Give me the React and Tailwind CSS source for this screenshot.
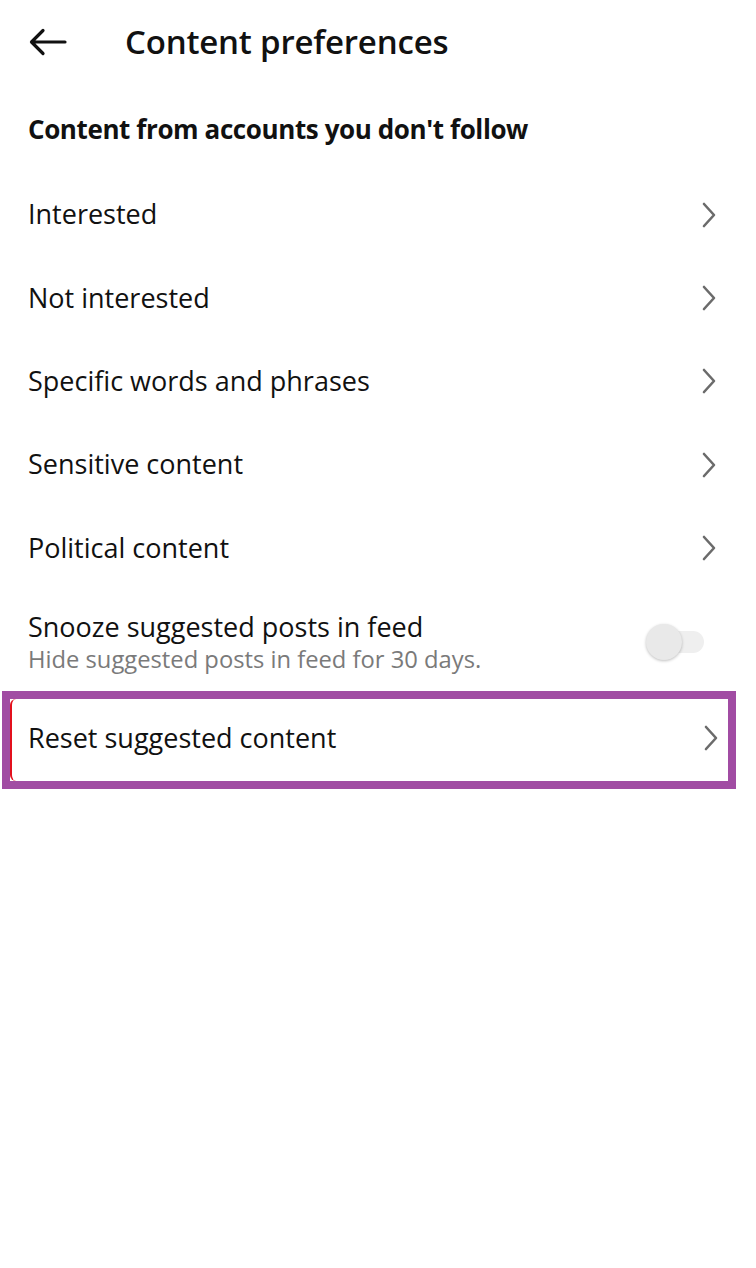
import { useState } from "react";

const rows = [
  "Interested",
  "Not interested",
  "Specific words and phrases",
  "Sensitive content",
  "Political content",
];

function Chevron() {
  return (
    <svg width="18" height="28" viewBox="0 0 18 28" className="shrink-0">
      <path d="M4 3 L14 14 L4 25" fill="none" stroke="#6b6b6b" strokeWidth="2.6" strokeLinecap="round" strokeLinejoin="round" />
    </svg>
  );
}

function BackArrow() {
  return (
    <svg width="40" height="30" viewBox="0 0 40 30">
      <path d="M37 15 H4 M15 3.5 L3.5 15 L15 26.5" fill="none" stroke="#111" strokeWidth="3.2" strokeLinecap="round" strokeLinejoin="round" />
    </svg>
  );
}

export default function App() {
  const [snooze, setSnooze] = useState(false);

  return (
    <div className="min-h-[1268px] w-[756px] bg-white text-[#111]" style={{ fontFamily: "'Open Sans', 'Noto Sans', sans-serif" }}>
      <div className="w-[736px]">
        <div className="flex h-[86px] items-center pl-[28px] pb-[2px]">
          <button className="flex items-center"><BackArrow /></button>
          <h1 className="ml-[57px] text-[33px] font-semibold tracking-[-0.2px]">Content preferences</h1>
        </div>

        <div className="flex h-[87px] items-center pl-[28px]">
          <h2 className="text-[26px] font-bold tracking-[-0.4px]">Content from accounts you don't follow</h2>
        </div>

        {rows.map((r) => (
          <div key={r} className="flex h-[83.3px] items-center justify-between pl-[28px] pr-[18px]">
            <span className="text-[27px]">{r}</span>
            <Chevron />
          </div>
        ))}

        <div className="flex h-[102px] items-start justify-between pl-[28px] pr-[32px] pt-[21px]">
          <div className="flex flex-col">
            <span className="text-[27px] leading-[33px]">Snooze suggested posts in feed</span>
            <span className="text-[23.75px] leading-[33px] text-[#7a7a7a]">Hide suggested posts in feed for 30 days.</span>
          </div>
          <button onClick={() => setSnooze(!snooze)} className="relative mt-[14px] h-[36px] w-[58px]">
            <span className="absolute right-0 top-1/2 h-[22px] w-[44px] -translate-y-1/2 rounded-full bg-[#efefef]" />
            <span className="absolute left-0 top-0 h-[36px] w-[36px] rounded-full bg-[#e9e9e9] shadow-[0_1px_3px_rgba(0,0,0,0.25)]" />
          </button>
        </div>

        <div className="ml-[2px] border-[8px] border-[#a14ca3]">
          <div className="flex h-[82px] items-center justify-between rounded-[6px] border-l-[2px] border-[#e3101d] bg-white pl-[16px] pr-[8px] pb-[4px]">
            <span className="text-[27px]">Reset suggested content</span>
            <Chevron />
          </div>
        </div>
      </div>
    </div>
  );
}
